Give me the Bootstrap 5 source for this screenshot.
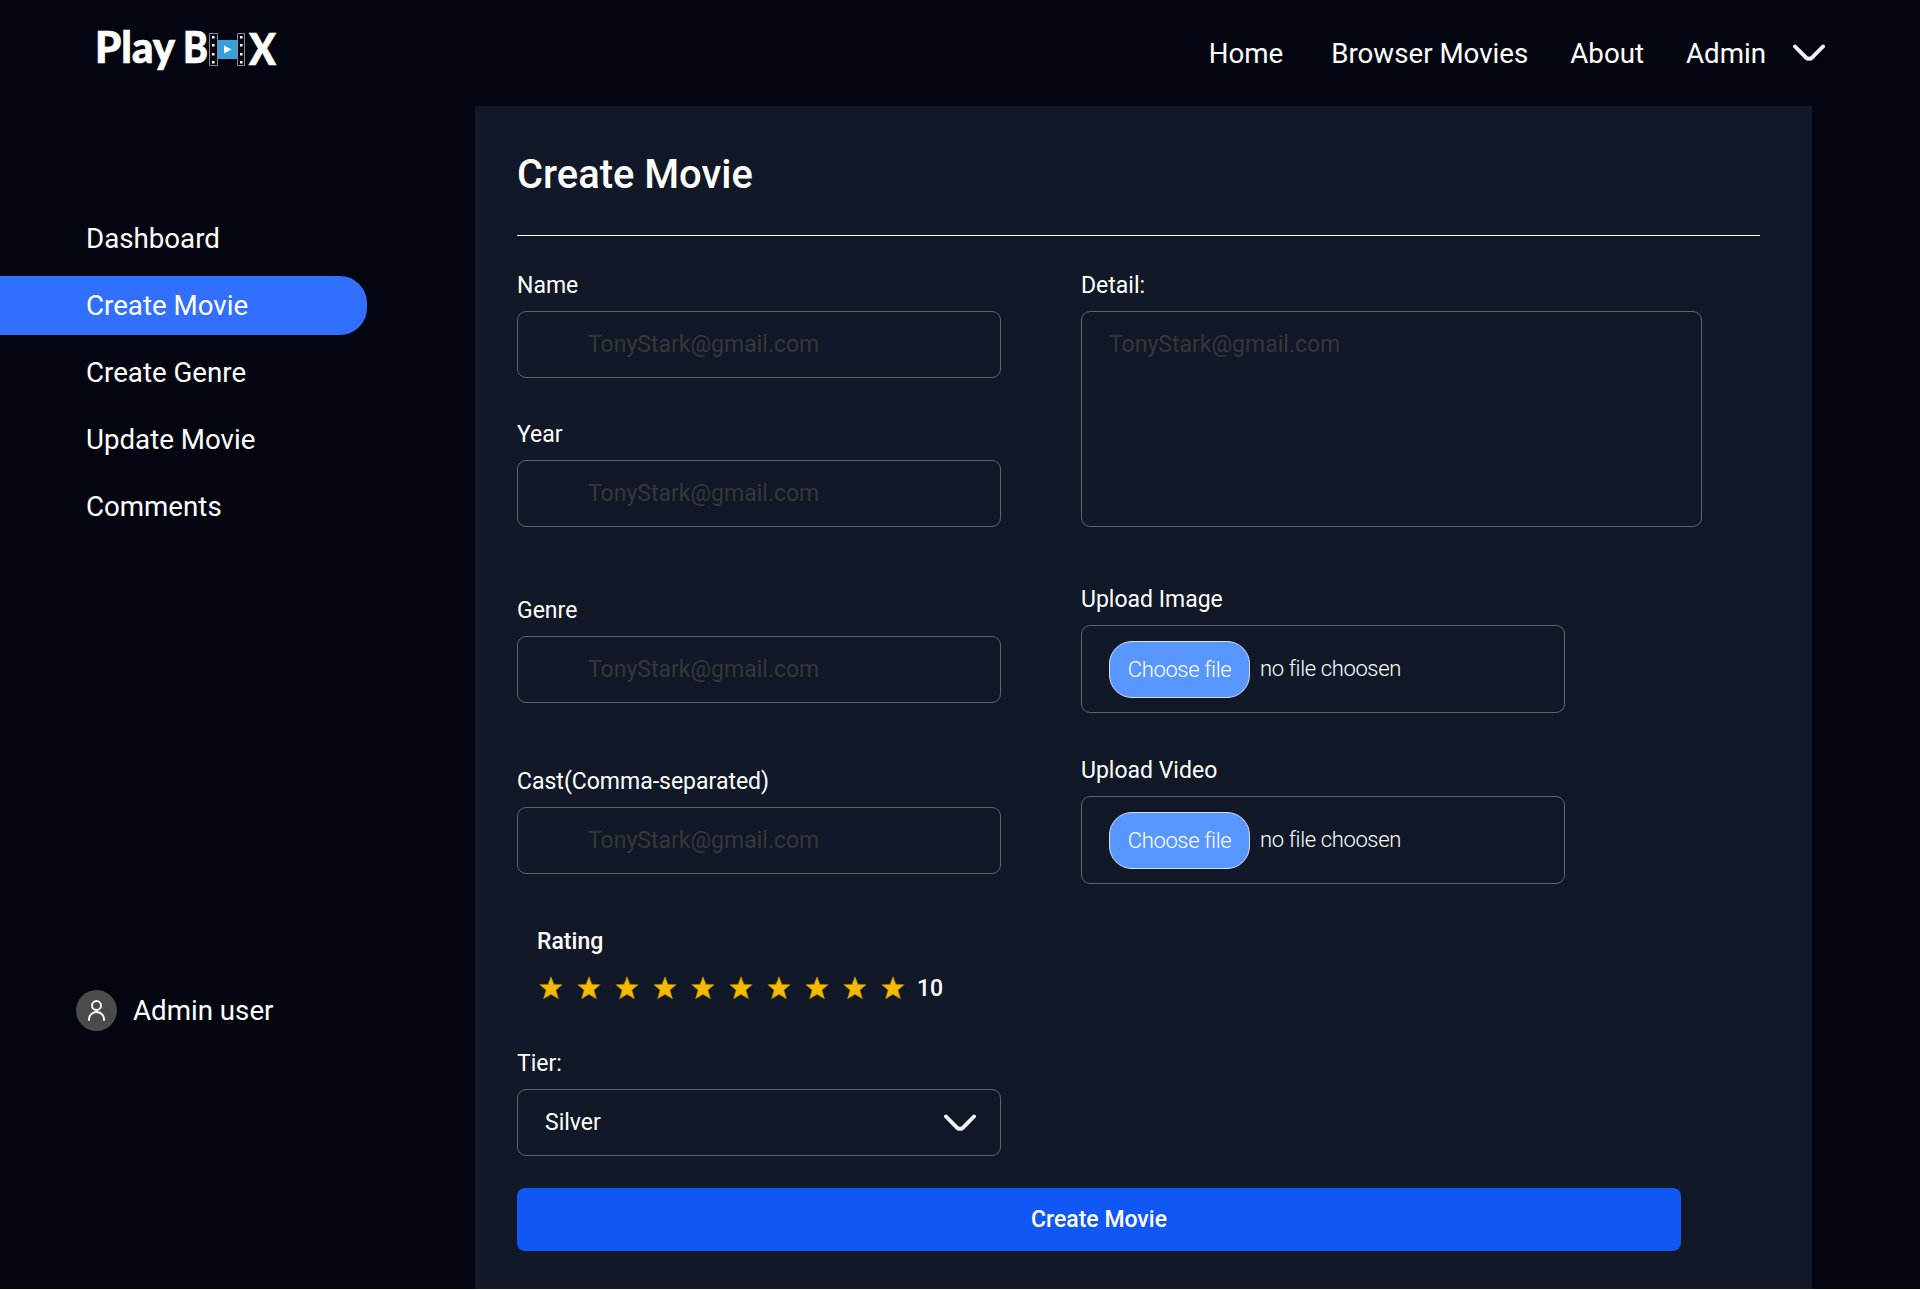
<!DOCTYPE html>
<html lang="en">
<head>
<meta charset="utf-8">
<meta name="viewport" content="width=device-width, initial-scale=1">
<title>Play Box - Create Movie</title>
<link href="https://cdn.jsdelivr.net/npm/bootstrap@5.3.0/dist/css/bootstrap.min.css" rel="stylesheet">
<style>
  body { font-family: Roboto, "Liberation Sans", sans-serif; background: #fff; color: #fff; font-size: 23px; line-height: 28px; }
  .app { height: 1289px; background: #030610; overflow: hidden; }
  .topbar { height: 106px; padding: 0 95px 0 90px; }
  .logo { margin-bottom: 6px; overflow: visible; }
  .topbar .nav-link { font-size: 27.7px; line-height: 33px; color: #fff; padding: 0; }
  .nav-home { margin-right: 48px; }
  .nav-browse { margin-right: 42px; }
  .nav-about { margin-right: 42px; }
  .nav-admin { margin-right: 27px; }
  .side { width: 475px; padding-top: 103px; }
  .side .nav-link { font-size: 27.7px; line-height: 33px; height: 59px; width: 367px; padding: 13px 0 0 86px; color: #fff; border-radius: 0 27px 27px 0; }
  .side .nav { gap: 8px; }
  .side .nav-link.active { background: #316fff; }
  .who { margin: 454px 0 0 76px; font-size: 27.7px; gap: 16px; }
  .panel { width: 1337px; height: 1183px; background: #111827; padding: 45px 42px 0; }
  .panel h1 { font-size: 39.9px; line-height: 47px; font-weight: 500; margin: 0; }
  .rule { height: 1px; background: #fff; margin: 37px 10px 0 0; }
  .fields { padding-top: 35px; }
  .left { width: 484px; margin-right: 80px; }
  .form-label { display: block; margin: 0 0 11px; padding-top: 1px; line-height: 28px; }
  .form-control, .pick { border: 1px solid #646466; border-radius: 9px; background: transparent; color: #fff; font-size: 23px; line-height: 28px; }
  .form-control { height: 67px; padding: 0 70px 1px; }
  .form-control::placeholder { color: #373737; opacity: 1; }
  textarea.form-control { display: block; width: 621px; height: 216px; padding: 19px 27px; resize: none; }
  .pick { width: 484px; height: 88px; padding: 0 27px; }
  .pick-btn { width: 141px; height: 57px; border: 1px solid #d5e0f5; border-radius: 23px; background: #5897ff; color: #fff; padding: 0; }
  .pick-btn, .pick span { font-size: 22px; letter-spacing: -.37px; font-weight: 300; white-space: nowrap; }
  .pick span { margin-left: 10px; }
  .gap-a { margin-top: 42px; } .gap-b { margin-top: 69px; } .gap-c { margin-top: 64px; }
  .gap-d { margin-top: 58px; } .gap-e { margin-top: 43px; }
  .rating { margin: 44px 0 0 20px; font-weight: 500; }
  .stars { margin: 18px 0 0 2px; gap: 14px; height: 28px; }
  .score { margin-left: -2px; padding-top: 1px; }
  .tier { margin-top: 47px; }
  .tier-box { padding: 0 24px 0 27px; }
  .go { width: 1164px; height: 63px; margin-top: 32px; padding-top: 8px; border: 0; border-radius: 8px; background: #1157f5; color: #fff; font-size: 23px; font-weight: 500; }
</style>
</head>
<body>
<div class="app">
  <header class="topbar d-flex justify-content-between align-items-center">
    <svg class="logo" width="194" height="72" viewBox="90 14 194 72" role="img" aria-label="Play Box">
      <g fill="#fff" font-family="Lato, sans-serif" font-weight="900" font-size="44" stroke="#fff" stroke-width=".7">
        <text x="95" y="62.700" textLength="80" lengthAdjust="spacingAndGlyphs">Play</text>
        <text x="183" y="62.700" textLength="25" lengthAdjust="spacingAndGlyphs">B</text>
        <text x="249" y="65.300" textLength="27" lengthAdjust="spacingAndGlyphs">X</text>
      </g>
      <g fill="none" stroke="#8b8b90" stroke-width="1"><path d="M209.500 33.500h8v32h-8zM237.500 33.500h7v32h-7z"/></g>
      <path fill="#369fdc" d="M218 40h19v19h-19z"/>
      <path fill="#fff" d="M224 45.500l7.500 4-7.500 4zM212 36h2.500v2.500H212zM212 44h2.500v2.500H212zM212 53h2.500v2.500H212zM212 61h2.500v2.500H212zM240 36h2.500v2.500H240zM240 44h2.500v2.500H240zM240 53h2.500v2.500H240zM240 61h2.500v2.500H240z"/>
    </svg>
    <nav class="nav flex-nowrap align-items-center">
      <a class="nav-link nav-home" href="#">Home</a>
      <a class="nav-link nav-browse" href="#">Browser Movies</a>
      <a class="nav-link nav-about" href="#">About</a>
      <a class="nav-link nav-admin" href="#">Admin</a>
      <svg width="32" height="18" viewBox="0 0 32 18" fill="none" stroke="#f4f4f4" stroke-width="3.900" stroke-linecap="round" stroke-linejoin="round"><path d="M2 2.500l10.500 10.700q3.500 3.200 7 0L30 2.500"/></svg>
    </nav>
  </header>
  <div class="d-flex">
    <aside class="side">
      <nav class="nav flex-column">
        <a class="nav-link" href="#">Dashboard</a>
        <a class="nav-link active" href="#">Create Movie</a>
        <a class="nav-link" href="#">Create Genre</a>
        <a class="nav-link" href="#">Update Movie</a>
        <a class="nav-link" href="#">Comments</a>
      </nav>
      <div class="who d-flex align-items-center">
        <svg width="41" height="41" viewBox="0 0 41 41"><circle cx="20.500" cy="20.500" r="20.500" fill="#4b4b4b"/><g fill="none" stroke="#fff" stroke-width="1.900" stroke-linecap="round"><circle cx="20.500" cy="15.500" r="4.500"/><path d="M13 30v-.5a7.500 7.500 0 0 1 15 0v.5"/></g></svg>
        <span>Admin user</span>
      </div>
    </aside>
    <main class="panel">
      <h1>Create Movie</h1>
      <div class="rule"></div>
      <form>
        <div class="fields d-flex">
          <div class="left">
            <div><label class="form-label">Name</label><input class="form-control" placeholder="TonyStark@gmail.com"></div>
            <div class="gap-a"><label class="form-label">Year</label><input class="form-control" placeholder="TonyStark@gmail.com"></div>
            <div class="gap-b"><label class="form-label">Genre</label><input class="form-control" placeholder="TonyStark@gmail.com"></div>
            <div class="gap-c"><label class="form-label">Cast(Comma-separated)</label><input class="form-control" placeholder="TonyStark@gmail.com"></div>
          </div>
          <div>
            <div><label class="form-label">Detail:</label><textarea class="form-control" placeholder="TonyStark@gmail.com"></textarea></div>
            <div class="gap-d"><label class="form-label">Upload Image</label><div class="pick d-flex align-items-center"><button type="button" class="btn pick-btn">Choose file</button><span>no file choosen</span></div></div>
            <div class="gap-e"><label class="form-label">Upload Video</label><div class="pick d-flex align-items-center"><button type="button" class="btn pick-btn">Choose file</button><span>no file choosen</span></div></div>
          </div>
        </div>
        <svg class="d-none"><symbol id="star" viewBox="0 0 24 24"><path fill="#f4ba00" stroke="#b98a08" stroke-width=".6" stroke-linejoin="round" d="M12 .8l2.900 7.600 8.300.3-6.300 5.400 2.500 8.600-7.400-4.400-7.400 4.400 2.500-8.600L.8 8.700l8.300-.3z"/></symbol></svg>
        <div class="rating">
          <div>Rating</div>
          <div class="stars d-flex align-items-center" id="stars"><span class="score">10</span></div>
        </div>
        <div class="tier left">
          <label class="form-label">Tier:</label>
          <div class="form-control tier-box d-flex align-items-center justify-content-between"><span>Silver</span>
            <svg width="32" height="18" viewBox="0 0 32 18" fill="none" stroke="#f4f4f4" stroke-width="3.900" stroke-linecap="round" stroke-linejoin="round"><path d="M2 2.500l10.500 10.700q3.500 3.200 7 0L30 2.500"/></svg>
          </div>
        </div>
        <button type="button" class="btn go">Create Movie</button>
      </form>
    </main>
  </div>
</div>
<script src="https://cdn.jsdelivr.net/npm/bootstrap@5.3.0/dist/js/bootstrap.bundle.min.js"></script>
<script>
  document.getElementById('stars').insertAdjacentHTML('afterbegin', '<svg width="24" height="24"><use href="#star"/></svg>'.repeat(10));
</script>
</body>
</html>
